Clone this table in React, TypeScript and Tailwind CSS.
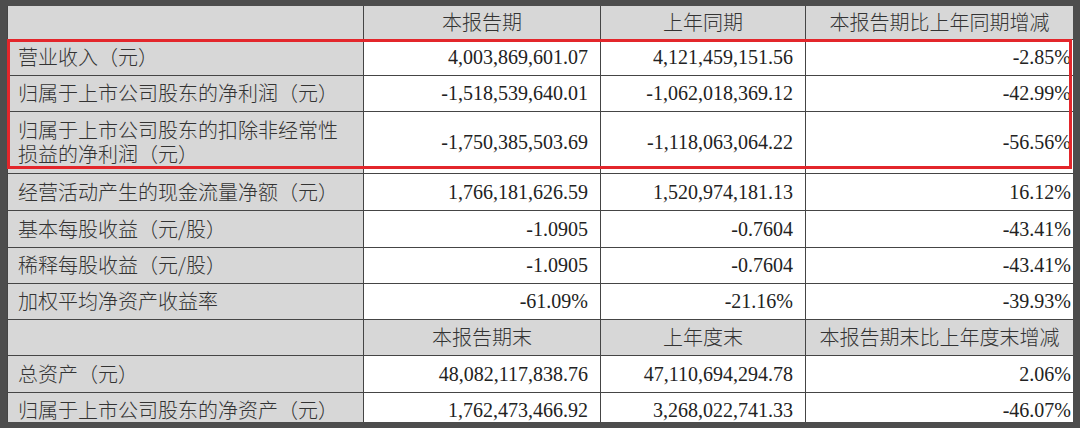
const cn = "font-['Noto_Sans_CJK_SC',sans-serif]";
const num = "font-['Liberation_Serif','Noto_Sans_CJK_SC',serif]";

type Row = { label: string[]; a: string; b: string; c: string; h: string };

const top: Row[] = [
  { label: ["营业收入（元）"], a: "4,003,869,601.07", b: "4,121,459,151.56", c: "-2.85%", h: "h-[36px]" },
  { label: ["归属于上市公司股东的净利润（元）"], a: "-1,518,539,640.01", b: "-1,062,018,369.12", c: "-42.99%", h: "h-[36px]" },
  {
    label: ["归属于上市公司股东的扣除非经常性", "损益的净利润（元）"],
    a: "-1,750,385,503.69",
    b: "-1,118,063,064.22",
    c: "-56.56%",
    h: "h-[62px]",
  },
  { label: ["经营活动产生的现金流量净额（元）"], a: "1,766,181,626.59", b: "1,520,974,181.13", c: "16.12%", h: "h-[37px]" },
  { label: ["基本每股收益（元/股）"], a: "-1.0905", b: "-0.7604", c: "-43.41%", h: "h-[37px]" },
  { label: ["稀释每股收益（元/股）"], a: "-1.0905", b: "-0.7604", c: "-43.41%", h: "h-[36px]" },
  { label: ["加权平均净资产收益率"], a: "-61.09%", b: "-21.16%", c: "-39.93%", h: "h-[36px]" },
];

const bottom: Row[] = [
  { label: ["总资产（元）"], a: "48,082,117,838.76", b: "47,110,694,294.78", c: "2.06%", h: "h-[37px]" },
  { label: ["归属于上市公司股东的净资产（元）"], a: "1,762,473,466.92", b: "3,268,022,741.33", c: "-46.07%", h: "h-[36px]" },
];

const cell = "border-[1.5px] border-[#454545]";

function HeaderRow({ cols, h }: { cols: string[]; h: string }) {
  return (
    <tr className={`${h} bg-[#d7d7d7]`}>
      <td className={`${cell} border-t-0`} />
      {cols.map((c) => (
        <td key={c} className={`${cell} border-t-0 text-center ${cn} font-light text-[20px] text-[#333]`}>
          {c}
        </td>
      ))}
    </tr>
  );
}

function DataRow({ r }: { r: Row }) {
  return (
    <tr className={r.h}>
      <td className={`${cell} bg-[#d7d7d7] pl-[10px] ${cn} font-light text-[20px] leading-[24px] text-[#333]`}>
        {r.label.map((l) => (
          <div key={l}>{l}</div>
        ))}
      </td>
      <td className={`${cell} bg-white pr-[12px] text-right ${num} text-[20px] text-[#222]`}>{r.a}</td>
      <td className={`${cell} bg-white pr-[12px] text-right ${num} text-[20px] text-[#222]`}>{r.b}</td>
      <td className={`${cell} bg-white pr-[2px] text-right ${num} text-[20px] text-[#222]`}>{r.c}</td>
    </tr>
  );
}

export default function App() {
  return (
    <div className="w-[1080px] h-[428px] bg-[#4d4d4d] pt-[6px] pl-[7px] overflow-hidden">
      <div className="relative w-[1066px] h-[416px] overflow-hidden">
        <table className="table-fixed border-collapse w-[1066px]">
          <colgroup>
            <col className="w-[356px]" />
            <col className="w-[237px]" />
            <col className="w-[205px]" />
            <col className="w-[268px]" />
          </colgroup>
          <tbody>
            <HeaderRow cols={["本报告期", "上年同期", "本报告期比上年同期增减"]} h="h-[33px]" />
            {top.map((r) => (
              <DataRow key={r.label[0]} r={r} />
            ))}
            <HeaderRow cols={["本报告期末", "上年度末", "本报告期末比上年度末增减"]} h="h-[36px]" />
            {bottom.map((r) => (
              <DataRow key={r.label[0]} r={r} />
            ))}
          </tbody>
        </table>
        {/* highlight box over the first three rows */}
        <div className="absolute left-0 top-[33px] w-[1065px] h-[130px] border-[3px] border-[#e3262b] pointer-events-none" />
      </div>
    </div>
  );
}
